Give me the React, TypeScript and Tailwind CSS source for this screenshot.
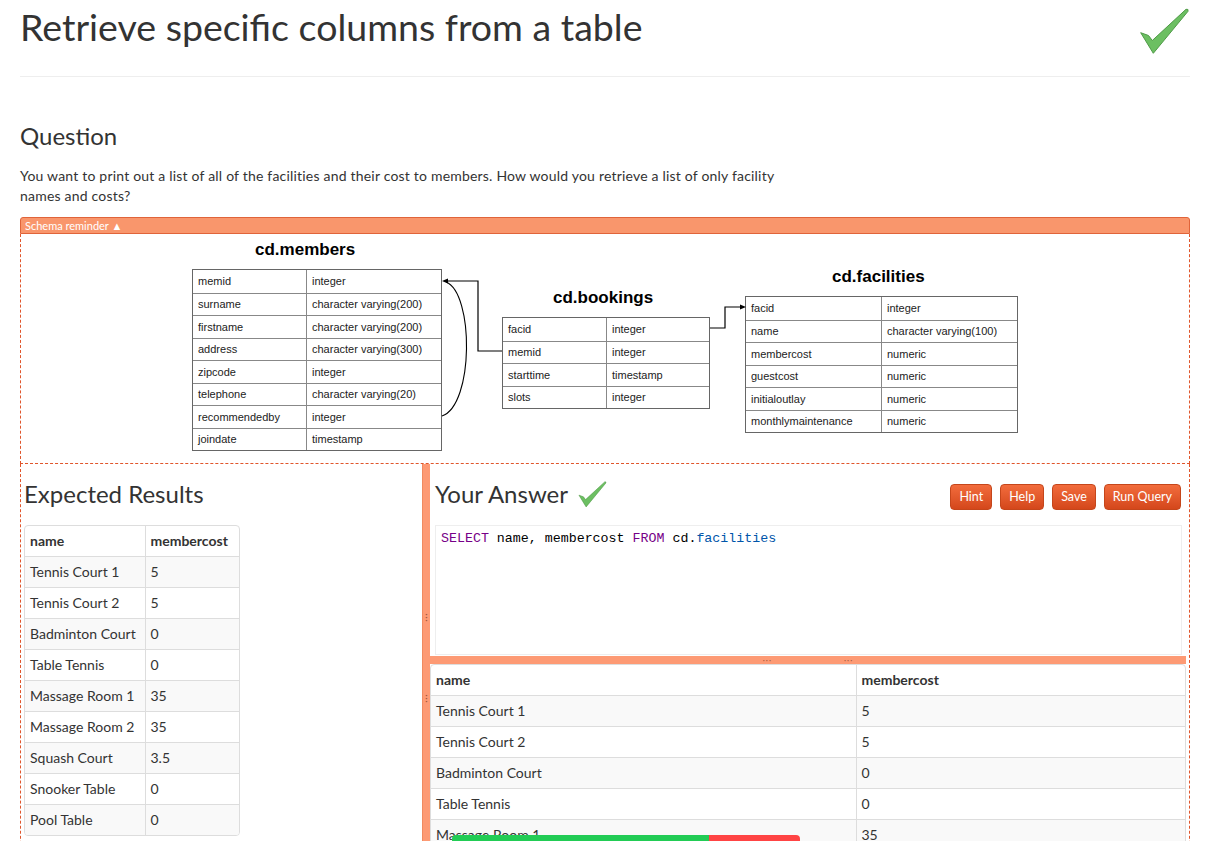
import React from 'react';

const members: [string, string][] = [
  ['memid', 'integer'],
  ['surname', 'character varying(200)'],
  ['firstname', 'character varying(200)'],
  ['address', 'character varying(300)'],
  ['zipcode', 'integer'],
  ['telephone', 'character varying(20)'],
  ['recommendedby', 'integer'],
  ['joindate', 'timestamp'],
];
const bookings: [string, string][] = [
  ['facid', 'integer'],
  ['memid', 'integer'],
  ['starttime', 'timestamp'],
  ['slots', 'integer'],
];
const facilities: [string, string][] = [
  ['facid', 'integer'],
  ['name', 'character varying(100)'],
  ['membercost', 'numeric'],
  ['guestcost', 'numeric'],
  ['initialoutlay', 'numeric'],
  ['monthlymaintenance', 'numeric'],
];
const results: [string, string][] = [
  ['Tennis Court 1', '5'],
  ['Tennis Court 2', '5'],
  ['Badminton Court', '0'],
  ['Table Tennis', '0'],
  ['Massage Room 1', '35'],
  ['Massage Room 2', '35'],
  ['Squash Court', '3.5'],
  ['Snooker Table', '0'],
  ['Pool Table', '0'],
];

function Check({ className }: { className?: string }) {
  return (
    <svg viewBox="0 0 51 47" className={className}>
      <path
        d="M1.7 24.7 L9.5 27.5 L13.3 32.5 L47 1.3 Q49.8 0.6 49 3.3 L14.3 45.3 Z"
        fill="#6cbf62"
        stroke="#4f9a47"
        strokeWidth="1"
        strokeLinejoin="round"
      />
    </svg>
  );
}

function SchemaTable({
  rows,
  firstW,
  secondW,
}: {
  rows: [string, string][];
  firstW: string;
  secondW: string;
}) {
  return (
    <div className="border border-[#666] bg-white font-['Liberation_Sans',Arial,sans-serif] text-[11px] text-[#222]">
      {rows.map(([a, b], i) => (
        <div key={i} className="flex h-[22.5px] border-t border-[#888] first:border-t-0">
          <div className={`${firstW} flex items-center border-r border-[#888] pl-[5px]`}>{a}</div>
          <div className={`${secondW} flex items-center pl-[5px]`}>{b}</div>
        </div>
      ))}
    </div>
  );
}

function Diagram() {
  return (
    <div className="relative mx-auto h-[228px] w-[830px]">
      <div className="absolute left-[65px] top-[4px] font-['Liberation_Sans',Arial,sans-serif] text-[17px] font-bold leading-[20px] text-black">
        cd.members
      </div>
      <div className="absolute left-[2px] top-[33px] w-[250px]">
        <SchemaTable rows={members} firstW="w-[114px]" secondW="flex-1" />
      </div>
      <div className="absolute left-[363px] top-[52px] font-['Liberation_Sans',Arial,sans-serif] text-[17px] font-bold leading-[20px] text-black">
        cd.bookings
      </div>
      <div className="absolute left-[312px] top-[81px] w-[208px]">
        <SchemaTable rows={bookings} firstW="w-[104px]" secondW="flex-1" />
      </div>
      <div className="absolute left-[642px] top-[31px] font-['Liberation_Sans',Arial,sans-serif] text-[17px] font-bold leading-[20px] text-black">
        cd.facilities
      </div>
      <div className="absolute left-[555px] top-[60px] w-[273px]">
        <SchemaTable rows={facilities} firstW="w-[136px]" secondW="flex-1" />
      </div>
      <svg className="pointer-events-none absolute inset-0" width="830" height="228" viewBox="0 0 830 228">
        <path d="M312 115 L288 115 L288 45 L258 45" fill="none" stroke="#000" strokeWidth="1.2" />
        <path d="M252 45 L258 42.5 L258 47.5 Z" fill="#000" />
        <path d="M252 180 C284 169 284 57 256 46" fill="none" stroke="#000" strokeWidth="1.1" />
        <path d="M520 92 L535 92 L535 71 L550 71" fill="none" stroke="#000" strokeWidth="1.2" />
        <path d="M556 71 L550 68.5 L550 73.5 Z" fill="#000" />
      </svg>
    </div>
  );
}

function ResultTable({ nameW, costW, full }: { nameW: string; costW: string; full?: boolean }) {
  return (
    <div className={`${full ? 'w-full' : 'inline-block'} overflow-hidden rounded-[4px] border border-[#ddd]`}>
      <table className={`${full ? 'w-full' : ''} border-collapse text-[14px] text-[#333]`}>
        <thead>
          <tr>
            <th className={`${nameW} h-[30px] pl-[5px] text-left font-bold`}>name</th>
            <th className={`${costW} h-[30px] border-l border-[#ddd] pl-[5px] pr-[4px] text-left font-bold`}>membercost</th>
          </tr>
        </thead>
        <tbody>
          {results.map(([n, c], i) => (
            <tr key={i} className={i % 2 === 0 ? 'bg-[#f9f9f9]' : 'bg-white'}>
              <td className="h-[31px] border-t border-[#ddd] pl-[5px] pr-[4px]">{n}</td>
              <td className="h-[31px] border-t border-l border-[#ddd] pl-[5px]">{c}</td>
            </tr>
          ))}
        </tbody>
      </table>
    </div>
  );
}

function Btn({ children }: { children: React.ReactNode }) {
  return (
    <button className="h-[26px] rounded-[4px] border border-[#c5461b] bg-linear-to-b from-[#f26c3c] to-[#d4471b] px-[8px] text-[12.5px] leading-[24px] text-white">
      {children}
    </button>
  );
}

export default function App() {
  return (
    <div className="min-h-screen bg-white font-['Lato','Open_Sans',sans-serif] text-[#333]">
      <div className="ml-[20px] w-[1170px]">
        <div className="flex h-[77px] items-start justify-between border-b border-[#eee]">
          <h1 className="mt-[7px] text-[37.5px] leading-[40px] font-normal">Retrieve specific columns from a table</h1>
          <Check className="mt-[8px] mr-[0px] h-[47px] w-[51px]" />
        </div>
        <h3 className="mt-[46px] text-[24px] leading-[26px]">Question</h3>
        <p className="mt-[17px] text-[14px] leading-[20px] tracking-[0.2px]">
          You want to print out a list of all of the facilities and their cost to members. How would you retrieve a list of only facility
          <br />
          names and costs?
        </p>
        <div className="mt-[11px] h-[17px] rounded-t-[3px] border border-[#e0643a] bg-[#f9966c] pl-[4px] text-[11px] leading-[15px] text-white">
          Schema reminder ▲
        </div>
        <div className="h-[230px] border-x border-b border-dashed border-[#e0552b] pt-[2px]">
          <Diagram />
        </div>
        <div className="flex h-[420px]">
          <div className="w-[402px] border-l border-dashed border-[#e0552b] pl-[3px]">
            <h3 className="mt-[17px] text-[24px] leading-[26px]">Expected Results</h3>
            <div className="mt-[18px]">
              <ResultTable nameW="w-[120px]" costW="w-[94px]" />
            </div>
          </div>
          <div className="flex w-[8px] flex-col items-center border-l border-[#f08a60] bg-[#fd9a74] pt-[148px] text-[9px] leading-[3px] text-[#a0553a]">
            <span>·</span>
            <span>·</span>
            <span>·</span>
            <span className="mt-[72px]">·</span>
            <span>·</span>
            <span>·</span>
          </div>
          <div className="flex-1 border-r border-dashed border-[#e0552b]">
            <div className="flex items-start justify-between pt-[17px] pl-[5px] pr-[8px]">
              <div className="flex items-start">
                <h3 className="text-[24px] leading-[26px]">Your Answer</h3>
                <Check className="ml-[10px] h-[27px] w-[29px]" />
              </div>
              <div className="mt-[3px] flex gap-[8px]">
                <Btn>Hint</Btn>
                <Btn>Help</Btn>
                <Btn>Save</Btn>
                <Btn>Run Query</Btn>
              </div>
            </div>
            <div className="mx-[5px] mt-[15px] mr-[7px] h-[130px] border border-[#eee] bg-white px-[5px] pt-[4px] font-['Liberation_Mono',monospace] text-[13.3px] leading-[17px] text-black">
              <span className="text-[#770088]">SELECT</span> name, membercost <span className="text-[#770088]">FROM</span> cd.
              <span className="text-[#0055aa]">facilities</span>
            </div>
            <div className="mt-[1px] mr-[3px] flex h-[8px] items-center justify-center gap-[72px] bg-[#fd9a74] text-[8px] leading-[8px] tracking-[1px] text-[#a0553a]">
              <span>···</span>
              <span>···</span>
            </div>
            <div className="mr-[3px]">
              <ResultTable nameW="w-[425px]" costW="" full />
            </div>
          </div>
        </div>
      </div>
      <div className="fixed left-[452px] top-[835px] flex h-[20px] w-[348px] overflow-hidden rounded-t-[4px]">
        <div className="w-[257px] bg-[#22cc55]" />
        <div className="flex-1 bg-[#ff4444]" />
      </div>
    </div>
  );
}
